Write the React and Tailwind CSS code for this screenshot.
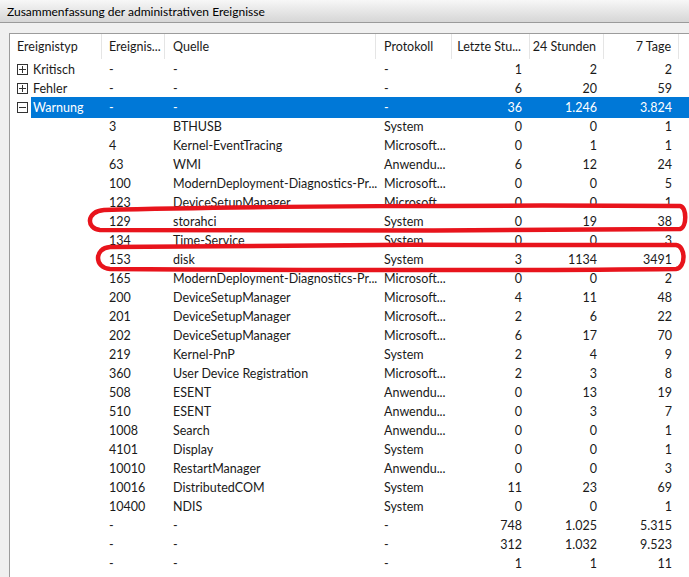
import React from 'react';

const groups = [
  { type: 'Kritisch', open: false, vals: ['1', '2', '2'] },
  { type: 'Fehler', open: false, vals: ['6', '20', '59'] },
  { type: 'Warnung', open: true, selected: true, vals: ['36', '1.246', '3.824'] },
];

const children = [
  ['3', 'BTHUSB', 'System', '0', '0', '1'],
  ['4', 'Kernel-EventTracing', 'Microsoft...', '0', '1', '1'],
  ['63', 'WMI', 'Anwendu...', '6', '12', '24'],
  ['100', 'ModernDeployment-Diagnostics-Pr...', 'Microsoft...', '0', '0', '5'],
  ['123', 'DeviceSetupManager', 'Microsoft...', '0', '0', '1'],
  ['129', 'storahci', 'System', '0', '19', '38'],
  ['134', 'Time-Service', 'System', '0', '0', '3'],
  ['153', 'disk', 'System', '3', '1134', '3491'],
  ['165', 'ModernDeployment-Diagnostics-Pr...', 'Microsoft...', '0', '0', '2'],
  ['200', 'DeviceSetupManager', 'Microsoft...', '4', '11', '48'],
  ['201', 'DeviceSetupManager', 'Microsoft...', '2', '6', '22'],
  ['202', 'DeviceSetupManager', 'Microsoft...', '6', '17', '70'],
  ['219', 'Kernel-PnP', 'System', '2', '4', '9'],
  ['360', 'User Device Registration', 'Microsoft...', '2', '3', '8'],
  ['508', 'ESENT', 'Anwendu...', '0', '13', '19'],
  ['510', 'ESENT', 'Anwendu...', '0', '3', '7'],
  ['1008', 'Search', 'Anwendu...', '0', '0', '1'],
  ['4101', 'Display', 'System', '0', '0', '1'],
  ['10010', 'RestartManager', 'Anwendu...', '0', '0', '3'],
  ['10016', 'DistributedCOM', 'System', '11', '23', '69'],
  ['10400', 'NDIS', 'System', '0', '0', '1'],
];

const totals = [
  ['748', '1.025', '5.315'],
  ['312', '1.032', '9.523'],
  ['1', '1', '11'],
];

const cols = 'grid grid-cols-[92px_63px_211px_76px_78px_74px_75px_1fr]';

function Box({ open }) {
  return (
    <svg width="11" height="11" viewBox="0 0 11 11" className="shrink-0">
      <rect x="0.5" y="0.5" width="10" height="10" fill="white" stroke="#333" />
      <line x1="2" y1="5.5" x2="9" y2="5.5" stroke="#333" />
      {!open && <line x1="5.5" y1="2" x2="5.5" y2="9" stroke="#333" />}
    </svg>
  );
}

function Row({ first, id, src, log, vals, selected }) {
  const sel = selected ? 'bg-[#0078d7] text-white' : '';
  return (
    <div className={`${cols} h-[19px] items-center`}>
      <div className="flex items-center h-full pl-[7px]">
        {first}
      </div>
      <div className={`h-full flex items-center pt-[2px] pl-[7px] ${sel}`}>{id}</div>
      <div className={`h-full flex items-center pt-[2px] pl-[8px] whitespace-nowrap ${sel}`}>{src}</div>
      <div className={`h-full flex items-center pt-[2px] pl-[8px] whitespace-nowrap ${sel}`}>{log}</div>
      <div className={`h-full flex items-center pt-[2px] justify-end pr-[8px] ${sel}`}>{vals[0]}</div>
      <div className={`h-full flex items-center pt-[2px] justify-end pr-[7px] ${sel}`}>{vals[1]}</div>
      <div className={`h-full flex items-center pt-[2px] justify-end pr-[7px] ${sel}`}>{vals[2]}</div>
      <div className={`h-full ${sel}`}></div>
    </div>
  );
}

export default function App() {
  return (
    <div
      className="relative w-[689px] h-[577px] overflow-hidden bg-[#f0f0f0] text-[12.5px] text-[#1a1a1a]"
      style={{ fontFamily: '"Segoe UI", Lato, "Noto Sans", sans-serif' }}
    >
      <div className="h-[23px] pl-[7px] pt-[1px] flex items-center bg-gradient-to-b from-[#f7f7f7] to-[#d6d6d6] border-b border-[#9a9a9a] text-[12px] text-black">
        Zusammenfassung der administrativen Ereignisse
      </div>
      <div className="ml-[9px] mt-[10px] bg-white border-l border-t border-[#9c9c9c] h-[600px]">
        <div className={`${cols} h-[25px] items-center`}>
          <div className="pl-[7px] pt-[2px] h-full flex items-center border-r border-[#e5e5e5]">Ereignistyp</div>
          <div className="pl-[7px] pt-[2px] h-full flex items-center border-r border-[#e5e5e5]">Ereignis...</div>
          <div className="pl-[8px] pt-[2px] h-full flex items-center border-r border-[#e5e5e5]">Quelle</div>
          <div className="pl-[8px] pt-[2px] h-full flex items-center border-r border-[#e5e5e5]">Protokoll</div>
          <div className="pr-[8px] pt-[2px] h-full flex items-center justify-end border-r border-[#e5e5e5]">Letzte Stu...</div>
          <div className="pr-[7px] pt-[2px] h-full flex items-center justify-end border-r border-[#e5e5e5]">24 Stunden</div>
          <div className="pr-[7px] pt-[2px] h-full flex items-center justify-end border-r border-[#e5e5e5]">7 Tage</div>
          <div></div>
        </div>
        {groups.map((g) => (
          <Row
            key={g.type}
            first={
              <>
                <Box open={g.open} />
                <span
                  className={`ml-[3px] h-full flex items-center pt-[2px] pl-[2px] flex-1 ${g.selected ? 'bg-[#0078d7] text-white' : ''}`}
                >
                  {g.type}
                </span>
              </>
            }
            id="-"
            src="-"
            log="-"
            vals={g.vals}
            selected={g.selected}
          />
        ))}
        {children.map((c) => (
          <Row key={c[0]} first={null} id={c[0]} src={c[1]} log={c[2]} vals={c.slice(3)} />
        ))}
        {totals.map((t, i) => (
          <Row key={i} first={null} id="-" src="-" log="-" vals={t} />
        ))}
      </div>
      <svg className="absolute inset-0 pointer-events-none" width="689" height="577" viewBox="0 0 689 577">
        <path
          d="M104 210 C 250 206, 500 205, 680 206 C 687 207, 687 227, 680 229 C 500 231, 250 231, 100 230 C 86 229, 86 211, 104 210 Z"
          fill="none"
          stroke="#e8141c"
          strokeWidth="4.5"
        />
        <path
          d="M110 247 C 280 245, 500 244, 676 245 C 686 246, 686 268, 676 269 C 500 271, 280 270, 110 269 C 94 268, 94 248, 110 247 Z"
          fill="none"
          stroke="#e8141c"
          strokeWidth="4.5"
        />
      </svg>
    </div>
  );
}
